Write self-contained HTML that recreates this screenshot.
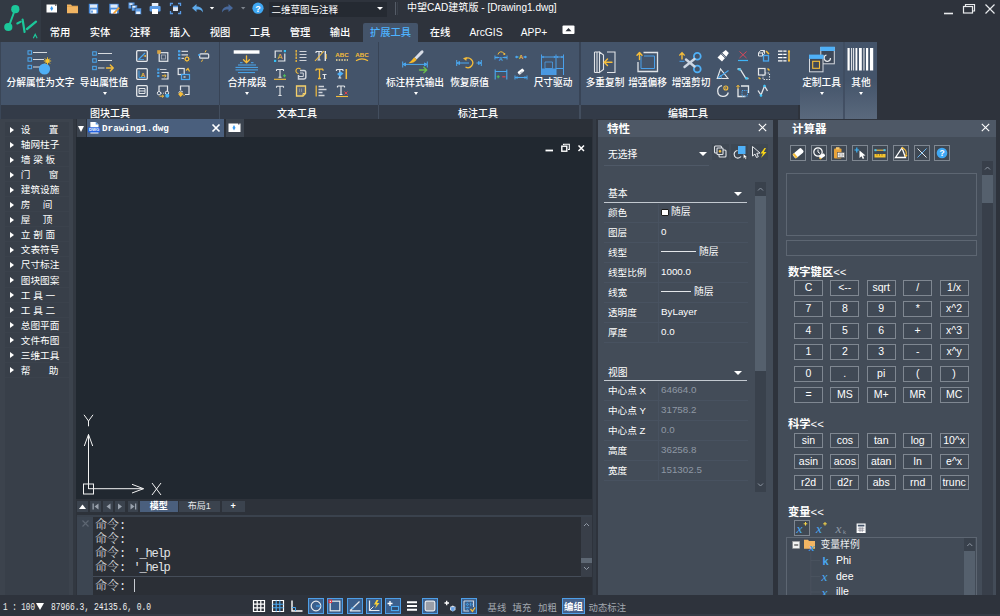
<!DOCTYPE html>
<html><head><meta charset="utf-8">
<style>
*{box-sizing:border-box;margin:0;padding:0}
html,body{width:1000px;height:616px;overflow:hidden;background:#2e333c}
body{font-family:"Liberation Sans","Noto Sans CJK SC",sans-serif;font-size:10px;color:#fff;position:relative}
.a{position:absolute}
svg{position:absolute;overflow:visible}
#app{position:absolute;left:0;top:0;width:1000px;height:616px;overflow:hidden;background:#2e333c}
#logo{left:0;top:0;width:40.5px;height:41.5px;background:#333a44}
.menu{top:24px;height:17px;line-height:17px;font-size:10.3px;font-weight:500;color:#fff;text-align:center;white-space:nowrap}
.menu.act{color:#4db2ff}
#title{left:407px;top:0;height:16px;line-height:16px;font-size:10.05px;color:#fff;white-space:nowrap}
#combo{left:269px;top:1.5px;width:118px;height:15px;background:#252a32;font-size:9.5px;line-height:16.5px;padding-left:2.5px;overflow:hidden;color:#fff;white-space:nowrap}
#ribbon{left:0;top:42px;width:800px;height:63px;background:#44546a}
#riblab{left:0;top:105px;width:798px;height:14px;background:#333b48}
.gl{top:107px;height:14px;line-height:14px;font-size:10px;font-weight:500;color:#fff;text-align:center;white-space:nowrap}
.sep{top:42px;width:3px;height:77px;background:#3a4657}
.big{top:75.5px;height:14px;line-height:14px;font-size:9.7px;font-weight:500;color:#fff;text-align:center;white-space:nowrap}
.dar{width:0;height:0;border-left:2.5px solid transparent;border-right:2.5px solid transparent;border-top:3px solid #fff}
.cpanel{top:42px;height:77px;background:linear-gradient(#44546a 0%,#44546a 50%,#5a697d 100%)}
#left{left:0;top:119px;width:76px;height:477px;background:#3c434d}
.li{left:5px;width:64px;height:14px;border-bottom:1px solid #3b424c;line-height:14px;font-size:9.65px;color:#fff;white-space:nowrap}
.li i{position:absolute;left:5.3px;top:3.5px;width:0;height:0;border-top:3.5px solid transparent;border-bottom:3.5px solid transparent;border-left:4px solid #fff}
.li span{position:absolute;left:15.8px;top:0;white-space:nowrap}
.li u{text-decoration:none}
#canvas{left:76px;top:137px;width:516px;height:362px;background:#212830}
#tabrow{left:76px;top:119px;width:516px;height:18px;background:#2b3038}
#doctab{left:87px;top:119px;width:137px;height:18px;background:#4a5f7d}
.panel{background:#434c58}
.phead{background:#4e5866;height:17px;left:0;top:0;width:100%;font-size:11.5px;font-weight:bold;line-height:19px;overflow:hidden;padding-left:9px;color:#fff}
#status{left:0;top:595px;width:1000px;height:21px;background:#2e333c}
.mono{font-family:"Liberation Mono","Noto Serif CJK SC",monospace}
.pl{left:10px;font-size:9.6px;line-height:14px;height:14px;color:#fff;white-space:nowrap}
.pv{left:63px;font-size:9.8px;line-height:14px;height:14px;color:#fff;white-space:nowrap}
.pv.g{color:#8f98a4}
.hl{height:1px;background:#4f5967}
.cb{height:16px;width:29px;border:1px solid #7f8791;background:#404955;font-size:10.5px;line-height:13px;text-align:center;color:#fff;white-space:nowrap}
.sh{font-size:11.3px;font-weight:bold;line-height:14px;height:14px;white-space:nowrap;color:#fff}
.tb{width:17px;height:17px;border:1px solid #7f8791;background:#3f4853}
.cmd{left:95px;font-size:12px;line-height:14px;height:14px;font-weight:300;color:#e2e4e7;white-space:nowrap;font-family:"Liberation Mono","Noto Serif CJK SC",monospace}
.cmd b{font-weight:normal;letter-spacing:-1.2px}
.sbtxt{font-size:9.4px;line-height:14px;height:14px;color:#a2a8b0;white-space:nowrap}
</style></head><body><div id="app">
<div id="logo" class="a"></div>
<svg style="left:0;top:0" width="41" height="41" viewBox="0 0 41 41"><g stroke="#1cc79a" fill="none" stroke-linecap="round">
<circle cx="15.300" cy="9.200" r="4.100" fill="#1cc79a" stroke="none"/><circle cx="8.300" cy="27" r="4.100" fill="#1cc79a" stroke="none"/>
<path d="M14.500 11 L9 26" stroke-width="2"/><path d="M17.300 23.500 L20.800 21.700" stroke-width="2"/><path d="M22.600 19.600 L24.600 32" stroke-width="2.200"/><path d="M27 29 L36 21.700" stroke-width="2.300"/>
<path d="M33.500 37.800 L35.200 34.400 L36.900 37.800" stroke-width="1.200"/></g></svg>
<div id="combo" class="a">二维草图与注释</div>
<div class="a" style="left:376.500px;top:7px;width:0;height:0;border-left:3.300px solid transparent;border-right:3.300px solid transparent;border-top:3.500px solid #fff"></div>
<div class="a" style="left:395px;top:2px;width:1px;height:13px;background:#555c67"></div><div class="a" style="left:397px;top:2px;width:1px;height:13px;background:#3a404a"></div>
<div id="title" class="a">中望CAD建筑版 - [Drawing1.dwg]</div>
<svg style="left:940px;top:0" width="60" height="20" viewBox="0 0 60 20"><g stroke="#e8eaec" fill="none" stroke-width="1.2">
<path d="M4 13.5 H13" stroke-width="1.6"/><rect x="23.5" y="6.5" width="9" height="6.5"/><path d="M25.5 6.5 V4.5 H34.5 V11 H32.5"/><path d="M45.5 4.5 L54.5 13.5 M54.5 4.5 L45.5 13.5"/></g></svg>
<svg style="left:44px;top:0" width="230" height="18" viewBox="44 0 230 18">
<rect x="46.5" y="4.5" width="10.5" height="8" fill="#fff"/><path d="M51.7 6 L53.2 8.5 L51.7 11 L50.2 8.5Z" fill="#3d9bf0"/><rect x="55" y="4.3" width="1.5" height="1.5" fill="#555"/>
<path d="M67 4.5 h4 l1 1.2 h6 v7.6 h-11z" fill="#f2b563"/><path d="M67 6.5 h11" stroke="#d99a45" stroke-width=".6"/>
<rect x="88.8" y="3.8" width="9.4" height="9.6" fill="#4c8fe0"/><rect x="90" y="4.5" width="7" height="3.2" fill="#dfeaf8"/><rect x="90.5" y="9.5" width="6" height="4" fill="#fff"/><rect x="91.2" y="10.5" width="1.6" height="2.2" fill="#4c8fe0"/>
<rect x="109.3" y="3.8" width="9.4" height="9.6" fill="#4c8fe0"/><rect x="110.5" y="4.5" width="7" height="3.2" fill="#dfeaf8"/><rect x="111" y="9.5" width="6" height="4" fill="#fff"/><path d="M113 13 L118.5 7 L119.8 8.2 L114.5 13.8Z" fill="#f0a030"/><path d="M113 13.8 l1-.2-.8-.8z" fill="#e04040"/>
<rect x="128.5" y="2.5" width="6" height="6" fill="#5a9be6"/><rect x="131.5" y="5" width="6" height="6" fill="#5a9be6" stroke="#2c313a" stroke-width=".6"/><rect x="135" y="8" width="6.5" height="6.5" fill="#5a9be6" stroke="#2c313a" stroke-width=".6"/><rect x="136.2" y="11.5" width="4" height="2.5" fill="#e8f0fa"/><rect x="132.5" y="6" width="3" height="1.6" fill="#e8f0fa"/><rect x="129.5" y="3.3" width="3" height="1.6" fill="#e8f0fa"/>
<rect x="151.8" y="3" width="6.5" height="3.5" fill="#e8f0fa"/><rect x="149.6" y="6" width="11" height="5.5" rx="1" fill="#5a9be6"/><rect x="152" y="9" width="6" height="5" fill="#fff"/>
<g stroke="#5a9be6" fill="none" stroke-width="1.3"><path d="M170.5 6 V3.5 H173 M178 3.5 H180.5 V6 M180.5 11 V13.5 H178 M173 13.5 H170.5 V11"/></g><rect x="173" y="6" width="5" height="5" fill="#dfe8f4"/><rect x="173" y="5.6" width="5" height="1.6" fill="#5a9be6"/>
<path d="M192 8 L196.5 4 V6.5 C201 6.5 203 9 203 12.5 C201.5 10 200 9.5 196.500 9.5 V12Z" fill="#5ea9ea"/>
<path d="M209.800 7 h4.4 l-2.200 2.600z" fill="#fff"/>
<path d="M233 8 L228.500 4 V6.500 C224 6.500 222 9 222 12.500 C223.500 10 225 9.500 228.500 9.500 V12Z" fill="#48689a"/>
<path d="M241 7 h4.400 l-2.200 2.600z" fill="#7d838c"/>
<circle cx="258" cy="8.2" r="5.600" fill="#3fa8f4"/><text x="258" y="11.500" font-size="9" font-weight="bold" fill="#fff" text-anchor="middle" font-family="Liberation Sans,sans-serif">?</text>
</svg>
<div class="a menu" style="left:40px;width:40px">常用</div>
<div class="a menu" style="left:80px;width:40px">实体</div>
<div class="a menu" style="left:120px;width:40px">注释</div>
<div class="a menu" style="left:160px;width:40px">插入</div>
<div class="a menu" style="left:200px;width:40px">视图</div>
<div class="a menu" style="left:240px;width:40px">工具</div>
<div class="a menu" style="left:280px;width:40px">管理</div>
<div class="a menu" style="left:320px;width:40px">输出</div>
<div class="a" style="left:363px;top:22.500px;width:55px;height:20px;background:#44546a;border-radius:2px 2px 0 0"></div>
<div class="a menu act" style="left:363px;width:55px">扩展工具</div>
<div class="a menu" style="left:420px;width:40px">在线</div>
<div class="a menu" style="left:461px;width:50px">ArcGIS</div>
<div class="a menu" style="left:514px;width:40px">APP+</div>
<svg style="left:562px;top:25px" width="13" height="10" viewBox="0 0 13 10"><rect x="0.500" y="0.500" width="12" height="8.500" rx="1" fill="#fff"/><path d="M3.500 6.300 L6.500 3 L9.500 6.300Z" fill="#2c313a"/></svg>
<div id="ribbon" class="a"></div>
<div id="riblab" class="a"></div>
<div class="a" style="left:0;top:42px;width:1.300px;height:77px;background:#3a4657"></div>
<div class="a" style="left:218.5px;top:42px;width:1.600px;height:63px;background:#384456"></div>
<div class="a" style="left:218.5px;top:105px;width:1.600px;height:14px;background:#434e5e"></div>
<div class="a" style="left:377.5px;top:42px;width:1.600px;height:63px;background:#384456"></div>
<div class="a" style="left:377.5px;top:105px;width:1.600px;height:14px;background:#434e5e"></div>
<div class="a" style="left:579.3px;top:42px;width:1.600px;height:63px;background:#384456"></div>
<div class="a" style="left:579.3px;top:105px;width:1.600px;height:14px;background:#434e5e"></div>
<div class="a gl" style="left:80px;width:60px">图块工具</div>
<div class="a gl" style="left:267px;width:60px">文本工具</div>
<div class="a gl" style="left:448px;width:60px">标注工具</div>
<div class="a gl" style="left:658px;width:60px">编辑工具</div>
<div class="a big" style="left:-4.5px;width:90px">分解属性为文字</div>
<div class="a big" style="left:59px;width:90px">导出属性值</div>
<div class="a big" style="left:202px;width:90px">合并成段</div>
<div class="a big" style="left:370px;width:90px">标注样式输出</div>
<div class="a big" style="left:424.5px;width:90px">恢复原值</div>
<div class="a big" style="left:508px;width:90px">尺寸驱动</div>
<div class="a big" style="left:560px;width:90px">多重复制</div>
<div class="a big" style="left:602.5px;width:90px">增强偏移</div>
<div class="a big" style="left:646px;width:90px">增强剪切</div>
<div class="a dar" style="left:102.5px;top:92px"></div>
<div class="a dar" style="left:245.0px;top:92px"></div>
<div class="a dar" style="left:413.5px;top:92px"></div>
<div class="a cpanel" style="left:799.700px;width:77.300px"></div>
<div class="a" style="left:843.300px;top:42px;width:1.400px;height:77px;background:#3e4b5f;opacity:.8"></div>
<div class="a big" style="left:796px;width:51px;top:76px">定制工具</div>
<div class="a big" style="left:841px;width:40px;top:76px">其他</div>
<div class="a dar" style="left:819.500px;top:92px"></div>
<div class="a dar" style="left:858.500px;top:92px"></div>
<svg style="left:24px;top:48px" width="32" height="30" viewBox="24 48 32 30">
<g fill="none" stroke="#4aa8f0" stroke-width="1"><rect x="28" y="50.800" width="3.600" height="3.400"/><rect x="28" y="57.800" width="3.600" height="3.400"/><rect x="28" y="65.300" width="3.600" height="3.400"/></g>
<g stroke="#d6dade" stroke-width="1.100"><path d="M33 52.500 H47 M33 59.500 H44 M33 67 H40"/></g>
<circle cx="44.500" cy="69" r="5.600" fill="#4fb0f7"/>
<g stroke="#f7c531" stroke-width="0.900"><path d="M47.500 57.300 V64.700 M43.800 61 H51.200 M44.900 58.400 L50.100 63.600 M50.100 58.400 L44.900 63.600"/></g><circle cx="47.500" cy="61" r="2.100" fill="#f7c531"/>
</svg>
<svg style="left:88px;top:48px" width="32" height="30" viewBox="88 48 32 30">
<g fill="none" stroke="#4aa8f0" stroke-width="1"><rect x="92.700" y="51.800" width="3.600" height="3.400"/><rect x="92.700" y="58.800" width="3.600" height="3.400"/><rect x="92.700" y="66.300" width="3.600" height="3.400"/></g>
<g stroke="#d6dade" stroke-width="1.100"><path d="M98 53.500 H112 M98 60.500 H112 M98 68 H104.500"/></g>
<g stroke="#f5bd3a" stroke-width="1.300" fill="none" stroke-linecap="round" stroke-linejoin="round"><path d="M106.500 68 H113 M110.300 65 L113.300 68 L110.300 71"/></g>
</svg>
<svg style="left:230px;top:48px" width="34" height="28" viewBox="230 48 34 28">
<rect x="233.700" y="50.300" width="25.800" height="3.400" fill="#fff"/>
<g stroke="#f5bd3a" stroke-width="1.300" fill="none" stroke-linecap="round" stroke-linejoin="round"><path d="M246.500 55.800 V62.500 M243.500 59.800 L246.500 62.800 L249.500 59.800"/></g>
<g stroke="#4aa8f0" stroke-width="1"><path d="M240 62.700 h2.500 M251 62.700 h2.500 M238 65 H256 M235.500 67.400 H258 M235.500 69.900 H258 M238 72.600 H255"/></g>
</svg>
<svg style="left:400px;top:48px" width="32" height="28" viewBox="400 48 32 28">
<g stroke="#4aa8f0" stroke-width="1" fill="none"><path d="M403 64.400 H427 M402.700 61.500 V67.500 M427.300 61.500 V67.500 M403 64.400 l2.500 -1.500 v3z M427 64.400 l-2.500 -1.500 v3z"/></g>
<path d="M414.500 57.500 L421 50.800 Q422.500 49.800 423.300 51 Q424 52 423 53 L416.500 59.500Z" fill="#d9dde6"/>
<path d="M414.300 57.300 L416.700 59.700 Q414 63.300 408.500 63.300 Q411.500 61 414.300 57.300Z" fill="#f7b928"/>
<g stroke="#6cc04a" stroke-width="1.300" fill="none" stroke-linecap="round" stroke-linejoin="round"><path d="M419.500 70 H426.500 M423.800 67.200 L426.800 70 L423.800 72.800"/></g>
</svg>
<svg style="left:454px;top:54px" width="30" height="18" viewBox="454 54 30 18">
<g stroke="#4aa8f0" stroke-width="1" fill="none"><path d="M457 63 H469 M476.500 63 H481 M456.700 60 V66 M481.300 60 V66 M457 63 l2.500 -1.500 v3z M481 63 l-2.500 -1.500 v3z"/></g>
<path d="M465 59 A4.800 4.800 0 1 1 465.500 67" stroke="#f5bd3a" stroke-width="1.300" fill="none"/><path d="M463 58.200 L466.800 57 L466.300 61Z" fill="#f5bd3a"/>
</svg>
<svg style="left:539px;top:52px" width="28" height="26" viewBox="539 52 28 26">
<rect x="541.500" y="68.500" width="14.500" height="6.500" fill="#4a98e0"/>
<g stroke="#4aa0ea" stroke-width="1" fill="none"><path d="M541.500 54.500 V75 M556 54.500 V75 M563.500 54.500 V75 M541.500 57 H556 M556 57 H563.500 M556 68.500 H563.500"/><path d="M545 62 H552.500 V68.500 H545Z" stroke-width=".8"/></g>
<g fill="#4aa0ea"><path d="M541.500 57 l2.200 -1.300 v2.600z M556 57 l-2.200 -1.300 v2.600z M556 57 l2.200 -1.300 v2.600z M563.500 57 l-2.200 -1.300 v2.600z"/></g>
</svg>
<svg style="left:592px;top:50px" width="26" height="25" viewBox="592 50 26 25">
<g stroke="#dfe2e6" stroke-width="1.100" fill="none"><path d="M594.500 52 V72.500 M597 52 V72.500 M594.500 52 H599.500 M594.500 72.500 H599.500 M599.500 52 L603.500 55 V69.500 L599.500 72.500Z M607 52 H615 V72.500 H607"/></g>
<g stroke="#f5bd3a" stroke-width="1.400" fill="none" stroke-linecap="round" stroke-linejoin="round"><path d="M604.500 62.300 H612 M607.500 59 L604.200 62.300 L607.500 65.600"/></g>
</svg>
<svg style="left:634px;top:50px" width="27" height="25" viewBox="634 50 27 25">
<g stroke="#dfe2e6" stroke-width="1.300" fill="none"><path d="M643.500 52.500 H657.500 V71.500 H638 V62"/></g>
<g stroke="#4aa0ea" stroke-width="1" fill="none"><path d="M641 56 V68.500 H654.500 V56 H644"/></g>
<g stroke="#f5bd3a" stroke-width="1.400" fill="none" stroke-linecap="round" stroke-linejoin="round"><path d="M639.500 52.800 V59.500 M637 55.300 L639.500 52.600 L642 55.300"/></g>
</svg>
<svg style="left:676px;top:50px" width="28" height="25" viewBox="676 50 28 25">
<g stroke="#4fb0f7" stroke-width="1.800" fill="none"><circle cx="697.300" cy="56.300" r="3.400"/><circle cx="697.300" cy="69" r="3.400"/></g>
<g stroke="#cdd6e2" stroke-width="2.400" stroke-linecap="round"><path d="M684.500 67 L694.500 59 M686 59.500 L694.500 66.500"/></g>
<g stroke="#f5bd3a" stroke-width="1.400" fill="none" stroke-linecap="round" stroke-linejoin="round"><path d="M682 52.800 V59 M679.700 55.100 L682 52.600 L684.300 55.100"/></g>
<path d="M679.500 61.300 H684.500" stroke="#4aa0ea" stroke-width="1"/>
</svg>
<svg style="left:806px;top:44px" width="30" height="30" viewBox="806 44 30 30">
<rect x="820.800" y="47.500" width="13.500" height="16.300" fill="#3d4859" stroke="#d5d9df" stroke-width="1"/><rect x="820.300" y="46.700" width="14.500" height="4.300" fill="#4fb0f7"/><path d="M826.500 55 A3.200 3.200 0 1 0 830.500 58" stroke="#e4e7ea" fill="none" stroke-width="1.200"/>
<rect x="809.500" y="55.500" width="13.500" height="16.300" fill="#3d4859" stroke="#d5d9df" stroke-width="1"/><rect x="809" y="54.600" width="14.500" height="4.300" fill="#4fb0f7"/><rect x="812.700" y="61.300" width="6.800" height="7" fill="none" stroke="#f5bd3a" stroke-width="1.100"/>
</svg>
<svg style="left:846px;top:46px" width="30" height="26" viewBox="846 46 30 26"><rect x="847.5" y="48" width="2.2" height="22.500" fill="#fff"/><rect x="851.2" y="48" width="0.9" height="22.500" fill="#fff"/><rect x="853.2" y="48" width="0.9" height="22.500" fill="#fff"/><rect x="855.5" y="48" width="1.8" height="22.500" fill="#fff"/><rect x="859" y="48" width="2.8" height="22.500" fill="#fff"/><rect x="863.5" y="48" width="0.9" height="22.500" fill="#fff"/><rect x="866" y="48" width="2.2" height="22.500" fill="#fff"/><rect x="870" y="48" width="3.2" height="22.500" fill="#fff"/></svg>
<svg style="left:136.0px;top:50.2px" width="12" height="12" viewBox="-6.0 -6.0 12 12"><rect x="-5.300" y="-5.300" width="10.600" height="10.600" rx="1" fill="none" stroke="#e4e7ea" stroke-width="1.300"/><path d="M-3.500 3.500 L3 -3" stroke="#4aa8f0" stroke-width="1.100"/><path d="M-3.500 3.500 H2" stroke="#4aa8f0" stroke-width=".8"/><path d="M1 0 l3 -1 v2z" fill="#f5bd3a"/></svg>
<svg style="left:136.0px;top:67.7px" width="12" height="12" viewBox="-6.0 -6.0 12 12"><rect x="-5.300" y="-5.300" width="10.600" height="10.600" rx="1" fill="none" stroke="#e4e7ea" stroke-width="1.300"/><path d="M-3 -3.500 V3.500 H3.500" stroke="#4aa8f0" stroke-width="1" fill="none"/><text x="1" y="2.800" font-size="6" font-weight="bold" fill="#f5bd3a" text-anchor="middle" font-family="Liberation Sans,sans-serif">A</text></svg>
<svg style="left:136.0px;top:85.2px" width="12" height="12" viewBox="-6.0 -6.0 12 12"><rect x="-5.300" y="-5.300" width="10.600" height="10.600" rx="1" fill="none" stroke="#e4e7ea" stroke-width="1.300"/><path d="M-3 -2.500 H3 M-3 0 H3 M-3 2.500 H3 M-3 -2.500 V2.500 M3 -2.500 V2.500" stroke="#e4e7ea" stroke-width="1" fill="none"/></svg>
<svg style="left:156.5px;top:50.2px" width="12" height="12" viewBox="-6.0 -6.0 12 12"><rect x="-3.800" y="-3.300" width="8.600" height="8.600" fill="none" stroke="#e4e7ea" stroke-width="1.200"/><rect x="-1.500" y="-1" width="4" height="4" fill="none" stroke="#aab1bb" stroke-width=".8"/><rect x="-5.800" y="-5.800" width="3.600" height="3.600" fill="#d9a441"/></svg>
<svg style="left:156.5px;top:67.7px" width="12" height="12" viewBox="-6.0 -6.0 12 12"><g fill="#4aa8f0"><rect x="-5.800" y="-5.500" width="2.200" height="2"/><rect x="-5.800" y="-2.200" width="2.200" height="2"/><rect x="-5.800" y="1.100" width="2.200" height="2"/></g><path d="M-3 -4.500 H3.500" stroke="#c9ced6" stroke-width="1"/><path d="M-1.500 -1.500 H5 V5 H-1.500" stroke="#e4e7ea" stroke-width="1.200" fill="none"/><path d="M-1 1.800 H3 M1.500 0.200 L3.200 1.800 L1.500 3.400" stroke="#f5bd3a" stroke-width="1" fill="none"/></svg>
<svg style="left:156.5px;top:85.2px" width="12" height="12" viewBox="-6.0 -6.0 12 12"><path d="M-4 0.500 V-5 H4.500 V0.500" stroke="#e4e7ea" stroke-width="1.200" fill="none"/><circle cx="-4" cy="2.200" r="1.700" fill="none" stroke="#e4e7ea" stroke-width="1"/><circle cx="4" cy="1.800" r="1.700" fill="none" stroke="#e4e7ea" stroke-width="1"/><path d="M-2 2.200 H2" stroke="#e4e7ea" stroke-width=".8" stroke-dasharray="1 1"/><circle cx="4.300" cy="4.800" r="2" fill="#3fb4f7"/><path d="M-3.500 5.200 H0.500 M-1 3.800 L0.700 5.200 L-1 6.500" stroke="#f5bd3a" stroke-width="1" fill="none"/></svg>
<svg style="left:177.5px;top:50.2px" width="12" height="12" viewBox="-6.0 -6.0 12 12"><g fill="#4aa8f0"><rect x="-6" y="-5.800" width="2.400" height="2.200"/><rect x="-6" y="-2.300" width="2.400" height="2.200"/><rect x="-6" y="1.200" width="2.400" height="2.200"/></g><path d="M-2.500 -4.700 H4 M-2.500 -1.200 H4 M-2.500 2.300 H0" stroke="#d0d4da" stroke-width="1.300"/><circle cx="3" cy="3" r="1.800" fill="none" stroke="#f5bd3a" stroke-width="1.200"/><path d="M3 -0.200 V6.200 M-0.200 3 H6.200 M0.800 0.800 L5.200 5.200 M5.200 0.800 L0.800 5.200" stroke="#f5bd3a" stroke-width=".6" stroke-dasharray="1 4.400"/></svg>
<svg style="left:177.5px;top:67.7px" width="12" height="12" viewBox="-6.0 -6.0 12 12"><rect x="-5.800" y="-5.500" width="6" height="6" fill="none" stroke="#e4e7ea" stroke-width="1.200"/><rect x="-2.500" y="0.500" width="8" height="5" fill="#44546a" stroke="#4aa8f0" stroke-width="1.200"/><path d="M-0.500 3 H1.500" stroke="#fff" stroke-width="1"/><path d="M2 -3.500 L4 -5.500 L5.500 -2.500" stroke="#f5bd3a" stroke-width="1.200" fill="none"/></svg>
<svg style="left:177.5px;top:85.2px" width="12" height="12" viewBox="-6.0 -6.0 12 12"><path d="M-3.500 -1 V-5 H5 V3.500 H1" stroke="#e4e7ea" stroke-width="1.200" fill="none"/><path d="M-5.800 3 L-3.500 0.500 L-0.500 3 L-3.500 6Z" fill="#f5bd3a"/><path d="M-5.500 1.500 Q-3.500 -1.500 -1 1" stroke="#e4e7ea" stroke-width=".9" fill="none"/><path d="M-0.200 3.300 l1.200 1.400 l-1.600 .2z" fill="#f5bd3a"/></svg>
<svg style="left:198.0px;top:50.2px" width="12" height="12" viewBox="-6.0 -6.0 12 12"><rect x="-4.300" y="-2.200" width="9" height="4.400" rx="1" fill="none" stroke="#e4e7ea" stroke-width="1.200"/><rect x="-5.800" y="-1.900" width="1.800" height="1.800" fill="#4aa8f0"/><path d="M1 -3.500 L2.200 -5.800 M-2.500 5.800 L-1.300 3.500" stroke="#f5bd3a" stroke-width="1"/></svg>
<svg style="left:273.5px;top:50.2px" width="12" height="12" viewBox="-6.0 -6.0 12 12"><path d="M2 -5 H-4.800 V2 M-2 5 H4.800 V-2.500" stroke="#e4e7ea" stroke-width="1.200" fill="none"/><rect x="3.800" y="-6" width="2.200" height="2.200" fill="#35c0f5"/><rect x="-6" y="3.800" width="2.200" height="2.200" fill="#35c0f5"/><text x="0" y="3" font-size="7.500" fill="#f5bd3a" text-anchor="middle" font-family="Liberation Sans,sans-serif">A</text></svg>
<svg style="left:273.5px;top:67.7px" width="12" height="12" viewBox="-6.0 -6.0 12 12"><path d="M-3.500 -4.500 H3.500 M0 -4.500 V3.300 M-1.500 3.300 H1.500 M-3.500 -4.500 V-3 M3.500 -4.500 V-3" stroke="#e4e7ea" stroke-width="1.100" fill="none"/><path d="M-6 5.300 H6" stroke="#f5bd3a" stroke-width="1.100"/><path d="M3 1.800 H6 M4.500 0.300 V3.300" stroke="#4fc25a" stroke-width="1.100"/></svg>
<svg style="left:273.5px;top:85.2px" width="12" height="12" viewBox="-6.0 -6.0 12 12"><path d="M-3.500 -4.800 H3.500 M0 -4.800 V4.500 M-1.600 4.500 H1.600 M-3.500 -4.800 V-3.300 M3.500 -4.800 V-3.300" stroke="#e4e7ea" stroke-width="1.100" fill="none"/></svg>
<svg style="left:294.5px;top:50.2px" width="12" height="12" viewBox="-6.0 -6.0 12 12"><path d="M-1.500 -4.500 H5.500 M-1.500 -1.500 H5.500 M-1.500 1.500 H5.500 M-1.500 4.500 H5.500" stroke="#d0d4da" stroke-width="1.200"/><path d="M-4.800 -6 V6" stroke="#f5bd3a" stroke-width="1.300" stroke-dasharray="2.500 .8"/></svg>
<svg style="left:294.5px;top:67.7px" width="12" height="12" viewBox="-6.0 -6.0 12 12"><path d="M-1 -3.500 H3 Q4.800 -3.500 4.800 -1.700 V3 Q4.800 5 2.800 5 H-2.500 V1" stroke="#cfd3da" stroke-width="1.500" fill="none"/><path d="M-1 -1 H2.300 V2.500 H-2.500" stroke="#cfd3da" stroke-width="1" fill="none"/><path d="M-2.500 -0.500 A2.600 2.600 0 1 1 -0.500 -4.800" stroke="#f5bd3a" stroke-width="1.100" fill="none"/></svg>
<svg style="left:294.5px;top:85.2px" width="12" height="12" viewBox="-6.0 -6.0 12 12"><path d="M-4.500 -5 H4.500 V2.500 L2 5 H-4.500Z" stroke="#f3cf6a" stroke-width="1.300" fill="#5a6577"/><path d="M-1.500 -2.500 V1 M0.500 -2.500 V1" stroke="#8e97a5" stroke-width=".8"/><path d="M4.500 2.500 H2 V5" stroke="#f3cf6a" stroke-width="1" fill="none"/></svg>
<svg style="left:315.0px;top:50.2px" width="12" height="12" viewBox="-6.0 -6.0 12 12"><path d="M-5 -4.500 H1 M-2 -4.500 V4 M-3.500 4 H-0.500 M-5 -4.500 V-3 M1 -4.500 V-3" stroke="#e4e7ea" stroke-width="1.200" fill="none"/><path d="M4.300 -5 V5" stroke="#e4e7ea" stroke-width="1.400"/><path d="M-6 5 L3 -5" stroke="#f5bd3a" stroke-width="1.100"/><path d="M5.300 -2 V3" stroke="#f5bd3a" stroke-width=".9"/></svg>
<svg style="left:315.0px;top:67.7px" width="12" height="12" viewBox="-6.0 -6.0 12 12"><path d="M-5 -4.800 H2 M-1.500 -4.800 V4.500 M-3 4.500 H0 M-5 -4.800 V-3.300 M2 -4.800 V-3.300" stroke="#f5bd3a" stroke-width="1.300" fill="none"/><path d="M1.500 0.500 H5.500 M3.500 0.500 V4.500 M2.500 4.500 H4.500" stroke="#e4e7ea" stroke-width="1.100" fill="none"/></svg>
<svg style="left:315.0px;top:85.2px" width="12" height="12" viewBox="-6.0 -6.0 12 12"><path d="M-4.800 -5.500 V5.500" stroke="#f5bd3a" stroke-width="1.200"/><path d="M-2.500 -4.500 H3 M-2.500 -1.500 H5.500 M-2.500 1.500 H1.500 M-2.500 4.500 H3.500" stroke="#d0d4da" stroke-width="1.300"/></svg>
<svg style="left:336.0px;top:50.2px" width="12" height="12" viewBox="-6.0 -6.0 12 12"><text x="0" y="1" font-size="6.200" font-weight="bold" fill="#f5bd3a" text-anchor="middle" font-family="Liberation Sans,sans-serif">ABC</text><path d="M-6 4 H6" stroke="#f2dc9a" stroke-width="1.400" stroke-dasharray="1.500 1.200"/></svg>
<svg style="left:336.0px;top:67.7px" width="12" height="12" viewBox="-6.0 -6.0 12 12"><path d="M-5.500 -4.500 H1 M-2.200 -4.500 V4 M-3.700 4 H-0.700 M-5.500 -4.500 V-3 M1 -4.500 V-3" stroke="#e4e7ea" stroke-width="1.200" fill="none"/><path d="M4.300 -5 V5" stroke="#f5bd3a" stroke-width="1.500"/><path d="M-5 0 L-1.500 -2.500 L1.500 -0.500 L-2 2.500Z" fill="#4fb0f7"/></svg>
<svg style="left:336.0px;top:85.2px" width="12" height="12" viewBox="-6.0 -6.0 12 12"><path d="M-4.500 -5 H2.500 M-1 -5 V3.500 M-2.500 3.500 H0.500 M-4.500 -5 V-3.500 M2.500 -5 V-3.500" stroke="#e4e7ea" stroke-width="1.200" fill="none"/><path d="M-6 5.500 H6" stroke="#f5bd3a" stroke-width="1.100"/><path d="M2.500 0.500 L5.500 3.500 M5.500 0.500 L2.500 3.500" stroke="#e0444e" stroke-width="1"/></svg>
<svg style="left:356.0px;top:50.2px" width="12" height="12" viewBox="-6.0 -6.0 12 12"><text x="0" y="0.500" font-size="6.200" font-weight="bold" fill="#f5bd3a" text-anchor="middle" font-family="Liberation Sans,sans-serif">ABC</text><path d="M-6 4.800 Q0 1 6 4.800" stroke="#f5bd3a" stroke-width="1.200" fill="none"/></svg>
<svg style="left:494.5px;top:50.7px" width="12" height="12" viewBox="-6.0 -6.0 12 12"><path d="M-6 0.500 H-1.500 M1.500 0.500 H6 M-6 -1.500 V2.500 M6 -1.500 V2.500" stroke="#4aa8f0" stroke-width="1"/><path d="M-2.200 0.500 l-2.200 -1.300 v2.600z M2.200 0.500 l2.200 -1.300 v2.600z" fill="#4aa8f0"/><text x="0" y="3.500" font-size="5.500" font-weight="bold" fill="#4aa8f0" text-anchor="middle" font-family="Liberation Sans,sans-serif">A</text><path d="M-3 -2.500 A3.200 3.200 0 0 1 3 -3.500" stroke="#f5bd3a" stroke-width="1" fill="none"/><circle cx="3.300" cy="-3" r="1.100" fill="#f5bd3a"/></svg>
<svg style="left:514.8px;top:50.7px" width="12" height="12" viewBox="-6.0 -6.0 12 12"><path d="M-6 0 H-2.500 M2.500 0 H6" stroke="#4aa8f0" stroke-width="1"/><path d="M-2.500 0 l-2.500 -1.500 v3z M2.500 0 l2.500 -1.500 v3z" fill="#4aa8f0"/><text x="0" y="2.300" font-size="6" font-weight="bold" fill="#f5bd3a" text-anchor="middle" font-family="Liberation Sans,sans-serif">A</text></svg>
<svg style="left:494.5px;top:67.7px" width="12" height="12" viewBox="-6.0 -6.0 12 12"><path d="M-5.800 -4.500 V5.500 M5.800 -4.500 V5.500 M-5.800 -2.500 H5.800" stroke="#4aa8f0" stroke-width="1.100"/><path d="M-4.300 2.800 H-1.300 M-2.800 1.300 V4.300" stroke="#4fc25a" stroke-width="1.100"/><path d="M1.300 2.800 H4.500" stroke="#e0444e" stroke-width="1.200"/></svg>
<svg style="left:514.8px;top:67.7px" width="12" height="12" viewBox="-6.0 -6.0 12 12"><path d="M-6 3.500 H6 M-6 1.500 V5.500 M6 1.500 V5.500" stroke="#4aa8f0" stroke-width="1"/><path d="M-6 3.500 l2.500 -1.400 v2.800z M6 3.500 l-2.500 -1.400 v2.800z" fill="#4aa8f0"/><rect x="-3" y="-4" width="6.500" height="3.300" rx=".8" transform="rotate(-38 0 -2)" fill="#fff"/><path d="M-1 -0.500 L1 -2.500" stroke="#44546a" stroke-width=".7"/></svg>
<svg style="left:716.5px;top:50.2px" width="12" height="12" viewBox="-6.0 -6.0 12 12"><path d="M-5.500 1.500 L-1.500 -2.500 L2.500 1.500 L-1 5.500Z" fill="#fff"/><path d="M-0.800 -3.300 L2.800 -6 L5.800 -3 L3.300 0.800Z" fill="#fff"/><path d="M-2 -2 L2 2" stroke="#44546a" stroke-width=".8"/></svg>
<svg style="left:736.6px;top:50.2px" width="12" height="12" viewBox="-6.0 -6.0 12 12"><path d="M-3.500 -4.500 L3.500 2 M3.500 -4.500 L-3.500 2" stroke="#d8485a" stroke-width="1"/><path d="M-5 4.500 H5" stroke="#3fb4f7" stroke-width="1.200"/></svg>
<svg style="left:758.0px;top:50.2px" width="12" height="12" viewBox="-6.0 -6.0 12 12"><path d="M-5.500 -3 L-3.500 -5.500 H0.500 L-1.500 -3 Z M-5.500 -3 V0 H-1.500 V-3 M0.500 -5.500 V-2.500 L-1.500 0" stroke="#e4e7ea" stroke-width="1" fill="none"/><rect x="-0.500" y="-0.500" width="5" height="5.500" fill="none" stroke="#4aa8f0" stroke-width="1.300"/><path d="M2 -5 L5 -2" stroke="#f5bd3a" stroke-width="1.500"/></svg>
<svg style="left:778.0px;top:50.2px" width="12" height="12" viewBox="-6.0 -6.0 12 12"><path d="M-6 -4.800 H2.500 M-6 -1.600 H2.500 M-6 1.600 H2.500 M-6 4.800 H2.500" stroke="#fff" stroke-width="1.200" stroke-dasharray="4.500 .8"/><path d="M5 -5.500 V5.500" stroke="#f5bd3a" stroke-width="1.500"/><circle cx="5" cy="-4.500" r="1.100" fill="#f5bd3a"/><circle cx="5" cy="4.500" r="1.100" fill="#f5bd3a"/></svg>
<svg style="left:716.5px;top:67.7px" width="12" height="12" viewBox="-6.0 -6.0 12 12"><path d="M-5.800 4.500 H5 L-2.500 -5Z" stroke="#e4e7ea" stroke-width="1.100" fill="none"/><path d="M-5 4 L5.500 -3.500" stroke="#4aa8f0" stroke-width="1.100"/><path d="M-1.500 4.300 A5 5 0 0 0 -3.500 0.500" stroke="#4aa8f0" stroke-width=".9" fill="none"/></svg>
<svg style="left:736.6px;top:67.7px" width="12" height="12" viewBox="-6.0 -6.0 12 12"><path d="M-5.500 -5 H-3 L3 4.500 H5.500" stroke="#e4e7ea" stroke-width="1.300" fill="none"/><circle cx="-3.500" cy="-4.500" r="1.300" fill="#3fc4f7"/><circle cx="3.500" cy="4.300" r="1.300" fill="#3fc4f7"/></svg>
<svg style="left:758.0px;top:67.7px" width="12" height="12" viewBox="-6.0 -6.0 12 12"><rect x="-5.500" y="-5.500" width="6.500" height="6.500" fill="none" stroke="#e4e7ea" stroke-width="1.200"/><path d="M1 -1 H5.500 V5.500 H-1 V1" stroke="#e4e7ea" stroke-width="1.100" fill="none" stroke-dasharray="1.300 1.300"/><path d="M3.500 -5.500 L5.500 -3.500" stroke="#f5bd3a" stroke-width="1.500"/><path d="M-5.500 3.500 L-3.500 5" stroke="#f5bd3a" stroke-width="1.500"/></svg>
<svg style="left:716.5px;top:85.2px" width="12" height="12" viewBox="-6.0 -6.0 12 12"><path d="M-1 -5.300 A5.400 5.400 0 1 0 5.300 1.500" stroke="#e4e7ea" stroke-width="1.300" fill="none"/><circle cx="2.800" cy="-3" r="2" fill="none" stroke="#f5bd3a" stroke-width="1.100"/><circle cx="2.800" cy="-3" r=".7" fill="#f5bd3a"/></svg>
<svg style="left:736.6px;top:85.2px" width="12" height="12" viewBox="-6.0 -6.0 12 12"><path d="M-2 -5 H5.500 V2 M2.500 5.500 H-5 V-2.500" stroke="#e4e7ea" stroke-width="1.300" fill="none"/><rect x="-1" y="-0.500" width="5.500" height="5.500" fill="none" stroke="#4aa8f0" stroke-width="1" stroke-dasharray="1.200 1"/><path d="M-5 -2 V-5.500 M-6.500 -4 L-5 -5.800 L-3.500 -4" stroke="#f5bd3a" stroke-width="1" fill="none"/></svg>
<svg style="left:758.0px;top:85.2px" width="12" height="12" viewBox="-6.0 -6.0 12 12"><path d="M-6 -0.500 L-3 4 L0.500 -5 L3.500 0" stroke="#e4e7ea" stroke-width="1.300" fill="none"/><circle cx="0.500" cy="-5" r="1.300" fill="#3fc4f7"/><circle cx="-3" cy="4.500" r="1.300" fill="#3fc4f7"/></svg>
<div class="a panel" style="left:598px;top:120px;width:174.500px;height:475px">
<div class="a phead">特性</div>
<svg style="left:160px;top:3px" width="9" height="9" viewBox="0 0 9 9"><path d="M0.800 0.800 L8.200 8.200 M8.200 0.800 L0.800 8.200" stroke="#fff" stroke-width="1.100"/></svg>
<div class="a pl" style="top:27.500px;font-size:9.800px">无选择</div>
<div class="a" style="left:100.500px;top:31.500px;width:0;height:0;border-left:4.300px solid transparent;border-right:4.300px solid transparent;border-top:4.500px solid #fff"></div>
<div class="a" style="left:114px;top:23.500px;width:16.5px;height:16px;background:#3e4752"></div>
<div class="a" style="left:133px;top:23.500px;width:16.5px;height:16px;background:#3e4752"></div>
<div class="a" style="left:152px;top:23.500px;width:17.5px;height:16px;background:#3e4752"></div>
<svg style="left:114px;top:23px" width="56" height="17" viewBox="712 143 56 17">
<g fill="none" stroke="#dfe2e6" stroke-width="1.100"><rect x="714.500" y="146" width="7" height="7" rx="1"/><rect x="719" y="150" width="7" height="7" rx="1"/></g><rect x="717" y="148" width="6" height="6.500" rx=".8" fill="#3e4752" stroke="#dfe2e6" stroke-width="1.100"/><path d="M720 149.500 L721.500 151.300 L720 153 L718.500 151.300Z" fill="#f5bd3a"/>
<rect x="738" y="146" width="7.500" height="8" fill="#4fb0f7"/><path d="M737.500 150.500 A3.800 3.800 0 1 0 741 156.500" stroke="#e4e7ea" stroke-width="1.200" fill="none"/><path d="M743.500 154 v4.500 l1.200 -1 l.8 1.800 l.9 -.4 l-.8 -1.700 h1.500z" fill="#fff" stroke="#555" stroke-width=".3"/>
<path d="M752.500 146.500 V156 L755 154 L756.500 157.500 L758.300 156.700 L756.800 153.300 L760 153Z" fill="#3e4752" stroke="#e4e7ea" stroke-width="1"/><path d="M764.500 148 L760.500 153.500 H763 L761 158 L766.500 152 H763.800 L766 148Z" fill="#f7d417"/>
</svg>
<div class="a hl" style="left:6px;top:44.500px;width:105px"></div>
<div class="a" style="left:156.500px;top:62px;width:11px;height:310px;background:#39414c"></div>
<div class="a" style="left:156.500px;top:62px;width:11px;height:14px;background:#39414c"></div>
<div class="a" style="left:156.500px;top:76px;width:11px;height:175.400px;background:#55606d"></div>
<svg style="left:156.500px;top:62px" width="11" height="310" viewBox="0 0 11 310"><g stroke="#8d96a2" stroke-width="1" fill="none"><path d="M3 8.500 L5.500 6 L8 8.500"/><path d="M3 301.500 L5.500 304 L8 301.500"/></g></svg>
<div class="a pl" style="top:67px;font-size:9.800px">基本</div>
<div class="a" style="left:136px;top:72px;width:0;height:0;border-left:4.300px solid transparent;border-right:4.300px solid transparent;border-top:4.500px solid #fff"></div>
<div class="a" style="left:6px;top:81.5px;width:143px;height:1.200px;background:#c3c9d0"></div>
<div class="a pl" style="top:245.5px;font-size:9.800px">视图</div>
<div class="a" style="left:136px;top:250.5px;width:0;height:0;border-left:4.300px solid transparent;border-right:4.300px solid transparent;border-top:4.500px solid #fff"></div>
<div class="a" style="left:6px;top:260.0px;width:143px;height:1.200px;background:#c3c9d0"></div>
<div class="a pl" style="top:86.3px">颜色</div>
<div class="a pv" style="top:85.3px"><span style="display:inline-block;width:7.500px;height:7.500px;background:#fff;border-radius:1px;margin-right:2.500px;border:0.600px solid #1c1c1c;vertical-align:-1px"></span>随层</div>
<div class="a hl" style="left:6px;top:102.3px;width:144px;background:#485260"></div>
<div class="a pl" style="top:106.3px">图层</div>
<div class="a pv" style="top:105.3px">0</div>
<div class="a hl" style="left:6px;top:122.3px;width:144px;background:#485260"></div>
<div class="a pl" style="top:126.30000000000001px">线型</div>
<div class="a pv" style="top:125.30000000000001px"><span style="display:inline-block;width:35px;height:1px;background:#e4e7ea;vertical-align:3px;margin-right:3px"></span>随层</div>
<div class="a hl" style="left:6px;top:142.3px;width:144px;background:#485260"></div>
<div class="a pl" style="top:146.3px">线型比例</div>
<div class="a pv" style="top:145.3px">1000.0</div>
<div class="a hl" style="left:6px;top:162.3px;width:144px;background:#485260"></div>
<div class="a pl" style="top:166.3px">线宽</div>
<div class="a pv" style="top:165.3px"><span style="display:inline-block;width:30px;height:1px;background:#e4e7ea;vertical-align:3px;margin-right:3px"></span>随层</div>
<div class="a hl" style="left:6px;top:182.3px;width:144px;background:#485260"></div>
<div class="a pl" style="top:186.3px">透明度</div>
<div class="a pv" style="top:185.3px">ByLayer</div>
<div class="a hl" style="left:6px;top:202.3px;width:144px;background:#485260"></div>
<div class="a pl" style="top:205.8px">厚度</div>
<div class="a pv" style="top:204.8px">0.0</div>
<div class="a hl" style="left:6px;top:221.8px;width:144px;background:#485260"></div>
<div class="a pl" style="top:264.3px">中心点 X</div>
<div class="a pv g" style="top:263.3px">64664.0</div>
<div class="a hl" style="left:6px;top:280.3px;width:144px;background:#485260"></div>
<div class="a pl" style="top:284.3px">中心点 Y</div>
<div class="a pv g" style="top:283.3px">31758.2</div>
<div class="a hl" style="left:6px;top:300.3px;width:144px;background:#485260"></div>
<div class="a pl" style="top:304.3px">中心点 Z</div>
<div class="a pv g" style="top:303.3px">0.0</div>
<div class="a hl" style="left:6px;top:320.3px;width:144px;background:#485260"></div>
<div class="a pl" style="top:324px">高度</div>
<div class="a pv g" style="top:323px">36256.8</div>
<div class="a hl" style="left:6px;top:340px;width:144px;background:#485260"></div>
<div class="a pl" style="top:344px">宽度</div>
<div class="a pv g" style="top:343px">151302.5</div>
<div class="a hl" style="left:6px;top:360px;width:144px;background:#485260"></div>
<div class="a" style="left:59.500px;top:84px;width:1px;height:138px;background:#485260"></div>
<div class="a" style="left:59.500px;top:262.500px;width:1px;height:98px;background:#485260"></div>
</div>
<div class="a panel" style="left:778px;top:120px;width:218px;height:475px">
<div class="a phead" style="padding-left:14px">计算器</div>
<svg style="left:203px;top:3px" width="9" height="9" viewBox="0 0 9 9"><path d="M0.800 0.800 L8.200 8.200 M8.200 0.800 L0.800 8.200" stroke="#fff" stroke-width="1.100"/></svg>
<div class="a tb" style="left:12px;top:25.200px;width:16px;height:16px"></div>
<div class="a tb" style="left:32.5px;top:25.200px;width:16px;height:16px"></div>
<div class="a tb" style="left:53px;top:25.200px;width:16px;height:16px"></div>
<div class="a tb" style="left:73.60000000000002px;top:25.200px;width:16px;height:16px"></div>
<div class="a tb" style="left:94.20000000000005px;top:25.200px;width:16px;height:16px"></div>
<div class="a tb" style="left:115px;top:25.200px;width:16px;height:16px"></div>
<div class="a tb" style="left:135.5px;top:25.200px;width:16px;height:16px"></div>
<div class="a tb" style="left:156.20000000000005px;top:25.200px;width:16px;height:16px"></div>
<svg style="left:14px;top:27.200000000000003px" width="12" height="12" viewBox="-6 -6 12 12"><rect x="-5.500" y="-2.500" width="11" height="5.500" rx="1.500" transform="rotate(-40)" fill="#fff"/><path d="M-4.600 0.700 L-1.200 4.700" stroke="#f5bd3a" stroke-width="2.200" transform="rotate(0)"/></svg>
<svg style="left:34.5px;top:27.200000000000003px" width="12" height="12" viewBox="-6 -6 12 12"><circle cx="-1" cy="-1" r="4.200" fill="none" stroke="#fff" stroke-width="1.200"/><path d="M-1 -3.500 V-1 L1 0.500" stroke="#fff" stroke-width="1" fill="none"/><rect x="0" y="1.500" width="6" height="3.300" rx="1" transform="rotate(-35 3 3)" fill="#fff"/><path d="M0.500 4.800 L2.200 6" stroke="#f5bd3a" stroke-width="1.500"/></svg>
<svg style="left:55px;top:27.200000000000003px" width="12" height="12" viewBox="-6 -6 12 12"><rect x="-5" y="-4.500" width="7.500" height="10" rx="1" fill="#e8a23a"/><rect x="-3" y="-5.800" width="3.500" height="2.200" fill="#f5c870"/><rect x="-1.500" y="-0.500" width="7" height="5" fill="#fff" stroke="#555" stroke-width=".6"/><rect x="0" y="1" width="4" height="2" fill="none" stroke="#555" stroke-width=".5"/></svg>
<svg style="left:75.60000000000002px;top:27.200000000000003px" width="12" height="12" viewBox="-6 -6 12 12"><path d="M-5.500 -3 H-1 M-3.200 -5.500 V-0.500" stroke="#3fb4f7" stroke-width="1.200"/><path d="M-0.500 -2.500 V5 L1.500 3.300 L2.800 6 L4.200 5.300 L3 2.800 L5.500 2.500Z" fill="#fff"/></svg>
<svg style="left:96.20000000000005px;top:27.200000000000003px" width="12" height="12" viewBox="-6 -6 12 12"><path d="M-5.500 -2.800 H5.500" stroke="#f5bd3a" stroke-width="1.100"/><rect x="-5.500" y="-3.800" width="2" height="2" fill="#3fc4f7"/><rect x="3.500" y="-3.800" width="2" height="2" fill="#3fc4f7"/><rect x="-5.500" y="1" width="11" height="3.500" fill="#f5c431"/><path d="M-3 1 v1.800 M-0.500 1 v1.800 M2 1 v1.800" stroke="#6a5410" stroke-width=".6"/></svg>
<svg style="left:117px;top:27.200000000000003px" width="12" height="12" viewBox="-6 -6 12 12"><path d="M-5.500 4.500 L1 -5 L4.500 4.500Z" fill="none" stroke="#fff" stroke-width="1.300"/><path d="M1.500 -5 A6 6 0 0 1 5.300 1" stroke="#f5bd3a" stroke-width="1.100" fill="none"/><circle cx="5" cy="2.500" r="1.200" fill="#f5bd3a"/><circle cx="1.500" cy="-5" r="1" fill="#f5bd3a"/></svg>
<svg style="left:137.5px;top:27.200000000000003px" width="12" height="12" viewBox="-6 -6 12 12"><path d="M-4.500 -4.500 L4.500 4.500" stroke="#e8eaec" stroke-width="1"/><path d="M4.500 -4.500 L-4.500 4.500" stroke="#6ab4ee" stroke-width="1"/></svg>
<svg style="left:158.20000000000005px;top:27.200000000000003px" width="12" height="12" viewBox="-6 -6 12 12"><circle cx="0" cy="0" r="5.300" fill="#3fa8f4"/><text x="0" y="3.200" font-size="8.500" font-weight="bold" fill="#fff" text-anchor="middle" font-family="Liberation Sans,sans-serif">?</text></svg>
<div class="a" style="left:203.500px;top:41px;width:11px;height:434px;background:#383f4a"></div>
<div class="a" style="left:203.500px;top:55px;width:11px;height:28px;background:#55606d"></div>
<svg style="left:203.500px;top:41px" width="11" height="14" viewBox="0 0 11 14"><path d="M3 8.500 L5.500 6 L8 8.500" stroke="#8d96a2" stroke-width="1" fill="none"/></svg>
<div class="a" style="left:8px;top:53px;width:191px;height:62.500px;border:1px solid #5d6672;background:#424b57"></div>
<div class="a" style="left:8px;top:119.500px;width:191px;height:16px;border:1px solid #5d6672;background:#424b57"></div>
<div class="a sh" style="left:10px;top:145px">数字键区<span style="font-weight:normal">&lt;&lt;</span></div>
<div class="a cb" style="left:16px;top:160px">C</div>
<div class="a cb" style="left:52.299999999999955px;top:160px"><--</div>
<div class="a cb" style="left:88.70000000000005px;top:160px">sqrt</div>
<div class="a cb" style="left:125.20000000000005px;top:160px">/</div>
<div class="a cb" style="left:161.60000000000002px;top:160px">1/x</div>
<div class="a cb" style="left:16px;top:181.3px">7</div>
<div class="a cb" style="left:52.299999999999955px;top:181.3px">8</div>
<div class="a cb" style="left:88.70000000000005px;top:181.3px">9</div>
<div class="a cb" style="left:125.20000000000005px;top:181.3px">*</div>
<div class="a cb" style="left:161.60000000000002px;top:181.3px">x^2</div>
<div class="a cb" style="left:16px;top:202.60000000000002px">4</div>
<div class="a cb" style="left:52.299999999999955px;top:202.60000000000002px">5</div>
<div class="a cb" style="left:88.70000000000005px;top:202.60000000000002px">6</div>
<div class="a cb" style="left:125.20000000000005px;top:202.60000000000002px">+</div>
<div class="a cb" style="left:161.60000000000002px;top:202.60000000000002px">x^3</div>
<div class="a cb" style="left:16px;top:224.2px">1</div>
<div class="a cb" style="left:52.299999999999955px;top:224.2px">2</div>
<div class="a cb" style="left:88.70000000000005px;top:224.2px">3</div>
<div class="a cb" style="left:125.20000000000005px;top:224.2px">-</div>
<div class="a cb" style="left:161.60000000000002px;top:224.2px">x^y</div>
<div class="a cb" style="left:16px;top:245.60000000000002px">0</div>
<div class="a cb" style="left:52.299999999999955px;top:245.60000000000002px">.</div>
<div class="a cb" style="left:88.70000000000005px;top:245.60000000000002px">pi</div>
<div class="a cb" style="left:125.20000000000005px;top:245.60000000000002px">(</div>
<div class="a cb" style="left:161.60000000000002px;top:245.60000000000002px">)</div>
<div class="a cb" style="left:16px;top:266.8px">=</div>
<div class="a cb" style="left:52.299999999999955px;top:266.8px">MS</div>
<div class="a cb" style="left:88.70000000000005px;top:266.8px">M+</div>
<div class="a cb" style="left:125.20000000000005px;top:266.8px">MR</div>
<div class="a cb" style="left:161.60000000000002px;top:266.8px">MC</div>
<div class="a sh" style="left:10px;top:297px">科学<span style="font-weight:normal">&lt;&lt;</span></div>
<div class="a cb" style="left:16px;top:312.7px;height:15.300px">sin</div>
<div class="a cb" style="left:52.299999999999955px;top:312.7px;height:15.300px">cos</div>
<div class="a cb" style="left:88.70000000000005px;top:312.7px;height:15.300px">tan</div>
<div class="a cb" style="left:125.20000000000005px;top:312.7px;height:15.300px">log</div>
<div class="a cb" style="left:161.60000000000002px;top:312.7px;height:15.300px">10^x</div>
<div class="a cb" style="left:16px;top:333.8px;height:15.300px">asin</div>
<div class="a cb" style="left:52.299999999999955px;top:333.8px;height:15.300px">acos</div>
<div class="a cb" style="left:88.70000000000005px;top:333.8px;height:15.300px">atan</div>
<div class="a cb" style="left:125.20000000000005px;top:333.8px;height:15.300px">ln</div>
<div class="a cb" style="left:161.60000000000002px;top:333.8px;height:15.300px">e^x</div>
<div class="a cb" style="left:16px;top:355px;height:15.300px">r2d</div>
<div class="a cb" style="left:52.299999999999955px;top:355px;height:15.300px">d2r</div>
<div class="a cb" style="left:88.70000000000005px;top:355px;height:15.300px">abs</div>
<div class="a cb" style="left:125.20000000000005px;top:355px;height:15.300px">rnd</div>
<div class="a cb" style="left:161.60000000000002px;top:355px;height:15.300px">trunc</div>
<div class="a sh" style="left:10px;top:385px">变量<span style="font-weight:normal">&lt;&lt;</span></div>
<div class="a" style="left:16.300px;top:400px;width:15.500px;height:15.500px;border:1px solid #7f8791;background:#3f4853"></div>
<svg style="left:14px;top:399px" width="80" height="18" viewBox="792 519 80 18">
<text x="796.500" y="533" font-size="13.500" font-family="Liberation Serif,serif" font-style="italic" fill="#4aa8f0">x</text><path d="M805.500 522 v3.600 M803.700 523.800 h3.600" stroke="#f5d34a" stroke-width="1"/>
<text x="816" y="533" font-size="13.500" font-family="Liberation Serif,serif" font-style="italic" fill="#4aa8f0">x</text><path d="M825 522 v3.600 M823.200 523.800 h3.600" stroke="#f5d34a" stroke-width="1"/>
<text x="835.500" y="533" font-size="13.500" font-family="Liberation Serif,serif" font-style="italic" fill="#8e97a3">x</text><text x="843" y="534" font-size="6" font-family="Liberation Sans,sans-serif" fill="#8e97a3">k</text>
<rect x="856.600" y="523.500" width="9" height="9.500" fill="#fff"/><rect x="857.800" y="524.700" width="6.600" height="1.800" fill="#44546a"/><path d="M857.800 528.200 h6.600 M857.800 530.200 h6.600 M860 527.300 v4.800 M862.200 527.300 v4.800" stroke="#667" stroke-width=".6"/>
</svg>
<div class="a" style="left:8px;top:417px;width:190.500px;height:60px;border:1px solid #5d6672;border-bottom:none;background:#424b57"></div>
<div class="a" style="left:185.500px;top:418px;width:11.500px;height:58px;background:#55606d"></div>
<div class="a" style="left:185.500px;top:418px;width:11.500px;height:13px;background:#39414c"></div>
<svg style="left:185.500px;top:418px" width="11.500" height="13" viewBox="0 0 11.500 13"><path d="M3.300 8 L5.800 5.500 L8.300 8" stroke="#8d96a2" stroke-width="1" fill="none"/></svg>
<svg style="left:12px;top:418px" width="70" height="58" viewBox="790 538 70 58">
<path d="M810.800 552 V596 M810.800 560.500 H820 M810.800 576.500 H820 M810.800 592 H820" stroke="#505a66" stroke-width=".5" fill="none"/>
<rect x="792.700" y="541.400" width="7" height="7" fill="#f2f2f2" stroke="#999" stroke-width=".5"/><path d="M794.200 545 h4" stroke="#333" stroke-width="1.100"/>
<path d="M804 539.800 h4 l1 1.300 h6 v7.600 h-11z" fill="#f2b563"/><text x="809" y="551" font-size="11" font-family="Liberation Serif,serif" font-style="italic" font-weight="bold" fill="#3d9bf0">x</text>
<text x="822.500" y="564.500" font-size="11" font-weight="bold" font-family="Liberation Sans,sans-serif" fill="#4aa8f0">k</text>
<text x="821.500" y="580.500" font-size="13.500" font-family="Liberation Serif,serif" font-style="italic" fill="#4aa8f0">x</text>
<text x="821.500" y="596.500" font-size="13.500" font-family="Liberation Serif,serif" font-style="italic" fill="#4aa8f0">x</text>
</svg>
<div class="a" style="left:42.500px;top:417.500px;font-size:9.800px;line-height:14px;color:#e9ebee;white-space:nowrap">变量样例</div>
<div class="a" style="left:58px;top:432.9px;font-size:10.500px;line-height:14px;color:#fff;white-space:nowrap">Phi</div>
<div class="a" style="left:58px;top:448.79999999999995px;font-size:10.500px;line-height:14px;color:#fff;white-space:nowrap">dee</div>
<div class="a" style="left:58px;top:464.29999999999995px;font-size:10.500px;line-height:14px;color:#fff;white-space:nowrap">ille</div>
</div>
<div id="left" class="a"></div>
<div class="a" style="left:5px;top:121.500px;width:64px;height:475px;background:#383f49"></div>
<div class="a" style="left:73px;top:119px;width:3px;height:477px;background:#323841"></div>
<div class="a li" style="top:123px"><i></i><span>设<u style="margin-left:18.3px">置</u></span></div>
<div class="a li" style="top:138px"><i></i><span>轴网柱子</span></div>
<div class="a li" style="top:153px"><i></i><span>墙<u style="margin-left:2.750px">梁</u><u style="margin-left:2.750px">板</u></span></div>
<div class="a li" style="top:168px"><i></i><span>门<u style="margin-left:18.3px">窗</u></span></div>
<div class="a li" style="top:183px"><i></i><span>建筑设施</span></div>
<div class="a li" style="top:198px"><i></i><span>房<u style="margin-left:12.4px">间</u></span></div>
<div class="a li" style="top:213px"><i></i><span>屋<u style="margin-left:12.4px">顶</u></span></div>
<div class="a li" style="top:228px"><i></i><span>立<u style="margin-left:2.750px">剖</u><u style="margin-left:2.750px">面</u></span></div>
<div class="a li" style="top:243px"><i></i><span>文表符号</span></div>
<div class="a li" style="top:258px"><i></i><span>尺寸标注</span></div>
<div class="a li" style="top:273.5px"><i></i><span>图块图案</span></div>
<div class="a li" style="top:288.5px"><i></i><span>工<u style="margin-left:2.750px">具</u><u style="margin-left:2.750px">一</u></span></div>
<div class="a li" style="top:303.5px"><i></i><span>工<u style="margin-left:2.750px">具</u><u style="margin-left:2.750px">二</u></span></div>
<div class="a li" style="top:318.5px"><i></i><span>总图平面</span></div>
<div class="a li" style="top:333.5px"><i></i><span>文件布图</span></div>
<div class="a li" style="top:348.5px"><i></i><span>三维工具</span></div>
<div class="a li" style="top:363.5px"><i></i><span>帮<u style="margin-left:18.3px">助</u></span></div>
<div id="tabrow" class="a"></div>
<div class="a" style="left:77px;top:119px;width:8.500px;height:18px;background:#3c444f"></div>
<div class="a" style="left:78px;top:126px;width:0;height:0;border-left:3.300px solid transparent;border-right:3.300px solid transparent;border-top:6px solid #fff"></div>
<div id="doctab" class="a"></div>
<svg style="left:87px;top:121px" width="14" height="14" viewBox="87 121 14 14"><path d="M90.400 122 h5.300 l2.800 2.600 v8.800 h-8.100z" fill="#fff"/><path d="M95.700 122 v2.600 h2.800z" fill="#5a9be8"/><rect x="88" y="127.200" width="12.300" height="5.200" rx="1.200" fill="#2563e0"/><text x="94.150" y="131.400" font-size="4.200" font-weight="bold" fill="#fff" text-anchor="middle" font-family="Liberation Sans,sans-serif">DWG</text></svg>
<div class="a" style="left:102px;top:122px;height:14px;line-height:14px;font-family:'Liberation Mono',monospace;font-weight:bold;font-size:9.300px;color:#fff;white-space:nowrap">Drawing1.dwg</div>
<svg style="left:211px;top:123px" width="10" height="10" viewBox="0 0 10 10"><path d="M1.500 1.500 L8.500 8.500 M8.500 1.500 L1.500 8.500" stroke="#fff" stroke-width="1.700"/></svg>
<div class="a" style="left:225.500px;top:119px;width:18.500px;height:18px;background:#3c444f"></div>
<svg style="left:228px;top:123px" width="14" height="10" viewBox="0 0 14 10"><rect x="0.500" y="0.500" width="12" height="8.500" fill="#fff"/><path d="M6 2 L7.500 4.700 L6 7.500 L4.500 4.700Z" fill="#3d9bf0"/><rect x="10" y="0" width="1.500" height="1.500" fill="#556"/></svg>
<div id="canvas" class="a"></div>
<div class="a" style="left:593px;top:119px;width:3px;height:476px;background:#343b45"></div>
<svg style="left:543px;top:142px" width="45" height="12" viewBox="543 142 45 12"><g stroke="#fff" fill="none"><path d="M545.500 150.500 H553" stroke-width="1.800"/><rect x="561.800" y="146.200" width="5" height="5" stroke-width="1.400"/><path d="M563.500 145 V144.200 H569.300 V149.500 H568" stroke-width="1.100"/><path d="M578.500 145.500 L584 151 M584 145.500 L578.500 151" stroke-width="1.500"/></g></svg>
<svg style="left:76px;top:410px" width="100" height="90" viewBox="76 410 100 90"><g stroke="#f2f2f2" stroke-width="1" fill="none">
<rect x="83.500" y="484" width="10" height="10"/><path d="M88.500 489 V434.500 M84.300 446 L88.500 434.500 L92.700 446"/><path d="M88.500 488.700 H143.500 M132 484.300 L143.500 488.700 L132 493"/>
<path d="M84 414.800 L88.500 421 L93 414.800 M88.500 421 V426.300"/><path d="M152 483 L161 495 M161 483 L152 495"/></g></svg>
<div class="a" style="left:76px;top:499px;width:516px;height:17px;background:#2d323a"></div>
<div class="a" style="left:77px;top:501px;width:11px;height:11px;background:#3b434e"></div>
<div class="a" style="left:90px;top:501px;width:10.5px;height:11px;background:#3b434e"></div>
<div class="a" style="left:103px;top:501px;width:10px;height:11px;background:#3b434e"></div>
<div class="a" style="left:115px;top:501px;width:10px;height:11px;background:#3b434e"></div>
<div class="a" style="left:127.5px;top:501px;width:10px;height:11px;background:#3b434e"></div>
<svg style="left:76px;top:501px" width="64" height="11" viewBox="76 501 64 11"><path d="M79 509 L82.500 504.500 L86 509Z" fill="#fff"/><g fill="#9aa2ad"><path d="M98.500 503.500 v6 l-4 -3z"/><rect x="92.500" y="503.500" width="1.300" height="6"/><path d="M110.500 503.500 v6 l-4 -3z"/><path d="M118 503.500 v6 l4 -3z"/><path d="M130.500 503.500 v6 l4 -3z"/><rect x="135" y="503.500" width="1.300" height="6"/></g></svg>
<div class="a" style="left:140px;top:501px;width:37.500px;height:11px;background:#4a5f7d;font-size:9px;font-weight:bold;line-height:11px;text-align:center;color:#fff">模型</div>
<div class="a" style="left:179px;top:501px;width:40.500px;height:11px;background:#3b434e;font-size:9px;line-height:11px;text-align:center;color:#e6e8ea">布局1</div>
<div class="a" style="left:221.500px;top:501px;width:23.500px;height:11px;background:#3b434e;font-size:9px;font-weight:bold;line-height:10px;text-align:center;color:#fff">+</div>
<div class="a" style="left:77px;top:515px;width:515px;height:1.500px;background:#3a424d"></div>
<div class="a" style="left:77px;top:516.500px;width:16px;height:78px;background:#3c4551"></div>
<div class="a" style="left:93px;top:516.500px;width:499px;height:78px;background:#2b2f36"></div>
<svg style="left:81px;top:519px" width="9" height="9" viewBox="0 0 9 9"><path d="M1.500 1.500 L7.500 7.500 M7.500 1.500 L1.500 7.500" stroke="#5d6672" stroke-width="1.200"/></svg>
<div class="a cmd" style="top:518.5px">命令:</div>
<div class="a cmd" style="top:532.5px">命令:</div>
<div class="a cmd" style="top:547.0px">命令: <b>'_help</b></div>
<div class="a cmd" style="top:561.0px">命令: <b>'_help</b></div>
<div class="a cmd" style="top:579.5px">命令:</div>
<div class="a" style="left:93px;top:576px;width:499px;height:1.300px;background:#454d59"></div>
<div class="a" style="left:134px;top:578.500px;width:1px;height:13px;background:#c8ccd2"></div>
<div class="a" style="left:581px;top:516.500px;width:11px;height:60px;background:#393f49"></div>
<div class="a" style="left:581px;top:557.500px;width:11px;height:5px;background:#5d6773"></div>
<svg style="left:581px;top:516px" width="11" height="60" viewBox="0 0 11 60"><g stroke="#9099a5" stroke-width="1" fill="none"><path d="M3 10 L5.500 7.500 L8 10"/><path d="M3 51 L5.500 53.500 L8 51"/></g></svg>
<div id="status" class="a"></div>
<div class="a" style="left:50px;top:614px;width:950px;height:2px;background:#353b45"></div>
<div class="a" style="left:2.800px;top:600px;font-family:'Liberation Mono',monospace;font-size:10.800px;line-height:14px;height:14px;white-space:nowrap;color:#f0f0f0;transform-origin:0 50%;transform:scaleX(0.705)">1 : 100</div>
<div class="a" style="left:36px;top:603px;width:0;height:0;border-left:4px solid transparent;border-right:4px solid transparent;border-top:7px solid #fff"></div>
<div class="a" style="left:50.500px;top:600px;font-family:'Liberation Mono',monospace;font-size:10.800px;line-height:14px;height:14px;white-space:nowrap;color:#f0f0f0;transform-origin:0 50%;transform:scaleX(0.736)">87966.3, 24135.6, 0.0</div>
<svg style="left:253px;top:599.500px" width="12" height="12" viewBox="-6 -6 12 12"><path d="M-5.500 -5.500 H5.500 V5.500 H-5.500Z M-5.500 -1.800 H5.500 M-5.500 1.800 H5.500 M-1.800 -5.500 V5.500 M1.800 -5.500 V5.500" stroke="#fff" stroke-width="1.200" fill="none"/></svg>
<svg style="left:272px;top:599.500px" width="12" height="12" viewBox="-6 -6 12 12"><path d="M-5.500 -5.500 H5.500 V5.500 H-5.500Z" stroke="#fff" stroke-width="1.200" fill="none"/><path d="M-5.500 -1.800 H5.500 M-5.500 1.800 H5.500 M-1.800 -5.500 V5.500 M1.800 -5.500 V5.500" stroke="#4aa8f0" stroke-width="1.100" fill="none"/></svg>
<svg style="left:291px;top:599.500px" width="12" height="12" viewBox="-6 -6 12 12"><path d="M-5 -5.500 V5 H5.500" stroke="#fff" stroke-width="1.400" fill="none"/><path d="M-5 1.500 H-1.500 V5" stroke="#4aa8f0" stroke-width="1" fill="none"/></svg>
<div class="a" style="left:307.5px;top:597.500px;width:16px;height:16.500px;background:#3b5f8c;border:1px solid #4e9fe8"></div>
<svg style="left:309.5px;top:599.500px" width="12" height="12" viewBox="-6 -6 12 12"><circle cx="0" cy="0" r="4.800" stroke="#e8eaec" stroke-width="1.200" fill="none"/><path d="M0 0 H4.800" stroke="#4aa8f0" stroke-width="1.100"/></svg>
<div class="a" style="left:327px;top:597.500px;width:16px;height:16.500px;background:#3b5f8c;border:1px solid #4e9fe8"></div>
<svg style="left:329px;top:599.500px" width="12" height="12" viewBox="-6 -6 12 12"><rect x="-4.800" y="-4.800" width="9.600" height="9.600" stroke="#e8eaec" stroke-width="1.200" fill="none"/><rect x="-6" y="-6" width="2.600" height="2.600" fill="none" stroke="#e8343e" stroke-width="1"/></svg>
<div class="a" style="left:346.5px;top:597.500px;width:16px;height:16.500px;background:#3b5f8c;border:1px solid #4e9fe8"></div>
<svg style="left:348.5px;top:599.500px" width="12" height="12" viewBox="-6 -6 12 12"><path d="M-5 4.800 H5.500 M-5 4.800 L4.500 -4.500" stroke="#e8eaec" stroke-width="1.200" fill="none"/><path d="M-4 2 H-1" stroke="#4aa8f0" stroke-width="1"/></svg>
<div class="a" style="left:365.5px;top:597.500px;width:16px;height:16.500px;background:#3b5f8c;border:1px solid #4e9fe8"></div>
<svg style="left:367.5px;top:599.500px" width="12" height="12" viewBox="-6 -6 12 12"><path d="M-4.500 -5.500 V4.500 H5.500" stroke="#e8eaec" stroke-width="1.200" fill="none"/><path d="M-4.500 4.500 L-0.500 0.500" stroke="#e8eaec" stroke-width="1"/><path d="M2.500 -6 L0 -1.500 H2.500 L1 2.500 L5.500 -3 H3 L4.500 -6Z" fill="#f7d038"/></svg>
<div class="a" style="left:384.5px;top:597.500px;width:16px;height:16.500px;background:#3b5f8c;border:1px solid #4e9fe8"></div>
<svg style="left:386.5px;top:599.500px" width="12" height="12" viewBox="-6 -6 12 12"><path d="M-5.500 -2.500 H-0.500 M-3 -5 V0" stroke="#fff" stroke-width="1.300"/><rect x="-1.500" y="0.500" width="7" height="4" stroke="#4aa8f0" stroke-width="1.100" fill="#2f4a6c"/></svg>
<svg style="left:405.5px;top:599.500px" width="12" height="12" viewBox="-6 -6 12 12"><path d="M-5 -3.800 H5 M-5 0 H5 M-5 3.800 H5" stroke="#fff" stroke-width="1.900"/></svg>
<div class="a" style="left:422px;top:597.500px;width:16px;height:16.500px;background:#3b5f8c;border:1px solid #4e9fe8"></div>
<svg style="left:424px;top:599.500px" width="12" height="12" viewBox="-6 -6 12 12"><rect x="-4.800" y="-4.800" width="9.600" height="9.600" rx="1.500" stroke="#e8eaec" stroke-width="1.200" fill="#9a9fa8"/></svg>
<svg style="left:444px;top:599.500px" width="12" height="12" viewBox="-6 -6 12 12"><path d="M-5.500 -3 H-1 M-3.300 -5.300 V-0.700" stroke="#fff" stroke-width="1.300"/><path d="M0 1 L2.800 -0.500 L5.500 1 V4 L2.800 5.500 L0 4Z" fill="#d8dce2"/><path d="M0 1 L2.800 2.500 L5.500 1 M2.800 2.500 V5.500" stroke="#5a9be6" stroke-width=".7" fill="none"/><circle cx="2.800" cy="3" r="2" fill="#5a9be6" opacity=".8"/></svg>
<div class="a" style="left:460.5px;top:597.500px;width:16px;height:16.500px;background:#3b5f8c;border:1px solid #4e9fe8"></div>
<svg style="left:462.5px;top:599.500px" width="12" height="12" viewBox="-6 -6 12 12"><path d="M-5 -5 H4.500 V1 M-5 -5 V5 H0" stroke="#cfd6e0" stroke-width="1.100" fill="none"/><path d="M-5 -1.700 H4.500 M-5 1.700 H1 M-1.700 -5 V5 M1.700 -5 V1" stroke="#4aa8f0" stroke-width=".9" stroke-dasharray="1.200 .8"/><path d="M1.500 3 L3.500 5.500 L6 1.500" stroke="#f5bd3a" stroke-width="1.300" fill="none"/></svg>
<div class="a sbtxt" style="left:487.5px;top:600.500px">基线</div>
<div class="a sbtxt" style="left:512.5px;top:600.500px">填充</div>
<div class="a sbtxt" style="left:538px;top:600.500px">加粗</div>
<div class="a" style="left:562px;top:598px;width:22.500px;height:16px;background:#46618a;border:1px solid #4e9fe8"></div>
<div class="a sbtxt" style="left:564px;top:600.300px;color:#fff;font-weight:bold">编组</div>
<div class="a sbtxt" style="left:588.500px;top:600.500px">动态标注</div>
</div></body></html>
